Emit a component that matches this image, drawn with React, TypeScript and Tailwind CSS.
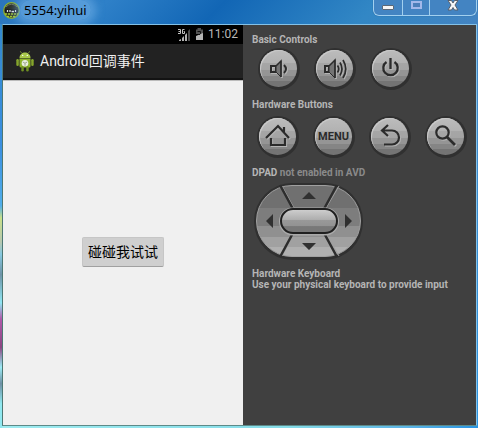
import type { ReactNode } from "react";

const bands =
  "bg-[linear-gradient(180deg,#bcbcbc_0%,#b2b2b2_34%,#a6a6a6_34%,#a4a4a4_54%,#959595_54%,#959595_70%,#858585_70%,#858585_84%,#747474_84%)]";

function RoundButton({ label, children }: { label: string; children: ReactNode }) {
  return (
    <button
      type="button"
      aria-label={label}
      className="size-[42px] shrink-0 rounded-full bg-[#303030] pt-0.5 pr-[3px] pb-[3px] pl-0.5"
    >
      <span
        className={`flex size-[37px] items-center justify-center rounded-full text-[#2b2b2b] shadow-[inset_1px_1px_0_#c8c8c8] ${bands}`}
      >
        {children}
      </span>
    </button>
  );
}

function Glyph({ children }: { children: ReactNode }) {
  return (
    <svg
      viewBox="0 0 37 37"
      className="size-[37px] drop-shadow-[1px_1px_0_#b4b4b4]"
      fill="none"
      stroke="currentColor"
      strokeWidth="2"
      aria-hidden="true"
    >
      {children}
    </svg>
  );
}

function EmulatorIcon() {
  return (
    <svg viewBox="0 0 17 17" className="size-[17px] shrink-0" aria-hidden="true">
      <circle cx="8.5" cy="8.5" r="7.8" fill="#2a2d24" stroke="#8fb030" strokeWidth="1.2" />
      <path d="M3 4.800Q8.500-.4 14 4.800" stroke="#6d725f" fill="none" />
      <path d="M2 7.500h13v3H2z" fill="#161616" />
      <path d="M4.500 8v2M7 8v2M8.500 9.500h2.500M12.500 8v2" stroke="#e4e4e4" strokeWidth="1.300" />
      <path d="M2 12h13M4 14.500h9" stroke="#a3c832" strokeWidth="1.600" strokeDasharray="2.200 .8" />
    </svg>
  );
}

function RobotIcon() {
  return (
    <svg viewBox="0 0 18 21" className="h-[21px] w-[18px] shrink-0" aria-hidden="true">
      <path d="M5.500 2 4.300.3M12.500 2 13.700.3" stroke="#8aa73a" strokeWidth=".8" />
      <path d="M3.500 7C3.500-.4 14.500-.4 14.500 7z" fill="#a9c94b" />
      <circle cx="6.700" cy="4.400" r=".7" fill="#fff" />
      <circle cx="11.300" cy="4.400" r=".7" fill="#fff" />
      <path d="M3.500 7.500h11V15q0 1.500-1.500 1.500H5Q3.500 16.500 3.500 15z" fill="#8fb52c" />
      <rect x=".3" y="8" width="2.500" height="7" rx="1.200" fill="#85a52c" />
      <rect x="15.200" y="8" width="2.500" height="7" rx="1.200" fill="#85a52c" />
      <rect x="5.300" y="15" width="2.500" height="5.500" rx="1.200" fill="#6f8f22" />
      <rect x="10.200" y="15" width="2.500" height="5.500" rx="1.200" fill="#6f8f22" />
      <circle cx="9" cy="12.200" r="3.300" fill="#e8eddf" />
      <path d="m6.800 11 2.200 1.200 2.200-1.200M9 12.200v2.600" stroke="#93a180" strokeWidth=".9" fill="none" />
    </svg>
  );
}

function StatusIcons() {
  return (
    <svg viewBox="0 0 26 14" className="h-[14px] w-[26px]" aria-hidden="true">
      <path d="M0 1.500h2.500v4H0M.5 3.500h2M6.500 1.500H4.500v4h2v-2h-.8" fill="none" stroke="#c4c4c4" />
      <path d="M12 1v12h-2V3z" fill="#4d4d4d" />
      <path d="M9 5v8H7V7zM6 8v5H4v-3zM3 11v2H1v-1z" fill="#b0b0b0" />
      <path d="M19.500 0H23v1.500h2V6h-7V1.500h1.500z" fill="#525252" />
      <path d="M18 12V8l7-3v7z" fill="#b5b5b5" />
      <path d="M19.500 3.500h3v2L21 7" stroke="#111" strokeWidth="1" fill="none" />
    </svg>
  );
}

function TitleBar() {
  return (
    <header className="flex h-6 items-start justify-between pl-[3px]">
      <div className="flex items-center">
        <EmulatorIcon />
        <h1 className="rounded-full bg-[#70afe6]/60 px-1 text-[13px] leading-5 text-black shadow-[0_0_8px_5px_#70afe699]">
          5554:yihui
        </h1>
      </div>
      <div className="mr-px flex h-4 overflow-hidden rounded-b-md border border-t-0 border-[#a2d0ef] bg-[#4384c2] shadow-[0_0_1px_#174d83]">
        <button type="button" aria-label="Minimize" className="flex w-[29px] justify-center border-r border-[#a2d0ef] pt-[5px]">
          <span className="h-[5px] w-3 rounded-[1px] border border-[#5d6875] bg-[#f5f5f5]" />
        </button>
        <button type="button" aria-label="Maximize" className="flex w-[27px] justify-center border-r border-[#a2d0ef] pt-px">
          <span className="h-2 w-[11px] border-2 border-[#a2b8ea] bg-[#4c7fba]" />
        </button>
        <button type="button" aria-label="Close" className="flex w-[46px] justify-center">
          <svg viewBox="0 0 12 11" className="h-[11px] w-3" aria-hidden="true">
            <path d="M1 .5h3.500L6 3 7.500.5H11L8 5l3 5H7.500L6 7.500 4.500 10H1l3-5z" fill="#f7f7f7" stroke="#59616d" />
          </svg>
        </button>
      </div>
    </header>
  );
}

function Phone() {
  return (
    <main className="flex w-60 shrink-0 flex-col bg-[#f0f0f0]">
      <div className="flex h-[19px] items-center justify-end gap-1 bg-black pr-[5px] font-[Roboto,sans-serif] text-[12px] leading-[19px] text-[#b9b9b9]">
        <StatusIcons />
        <time>11:02</time>
      </div>
      <div className="flex h-9 items-center gap-1.5 border-b-2 border-[#131313] bg-[#222] pl-[13px]">
        <RobotIcon />
        <h2 className="font-[Roboto,'Noto_Sans_CJK_SC',sans-serif] text-[14px] leading-5 text-[#f0f0f0]">
          Android回调事件
        </h2>
      </div>
      <div className="flex flex-1 items-center justify-center border-t border-[#bbb] pb-[3px]">
        <button
          type="button"
          className="h-[30px] rounded-[2px] border border-[#c6c6c6] border-b-[#a0a0a0] bg-[#cfcfcf] px-[5px] font-[Roboto,'Noto_Sans_CJK_SC',sans-serif] text-[14px] leading-7 text-black"
        >
          碰碰我试试
        </button>
      </div>
    </main>
  );
}

function DirectionPad() {
  return (
    <svg viewBox="0 0 110 77" className="mt-1 ml-0.5 h-[77px] w-[110px]" role="img" aria-label="DPAD">
      <defs>
        <linearGradient id="pad" x1="0" y1="0" x2="0" y2="1">
          <stop offset=".32" stopColor="#707070" />
          <stop offset=".32" stopColor="#7d7d7d" />
          <stop offset=".57" stopColor="#7d7d7d" />
          <stop offset=".57" stopColor="#909090" />
          <stop offset=".73" stopColor="#909090" />
          <stop offset=".73" stopColor="#a1a1a1" />
          <stop offset=".86" stopColor="#a1a1a1" />
          <stop offset=".86" stopColor="#b0b0b0" />
        </linearGradient>
        <linearGradient id="center" x1="0" y1="0" x2="0" y2="1">
          <stop offset="0" stopColor="#d0d0d0" />
          <stop offset=".45" stopColor="#adadad" />
          <stop offset=".46" stopColor="#999" />
          <stop offset=".72" stopColor="#929292" />
          <stop offset=".73" stopColor="#787878" />
        </linearGradient>
      </defs>
      <rect width="109" height="77" rx="38" fill="#303030" />
      <rect x="2.500" y="2.500" width="104" height="71" rx="35.500" fill="url(#pad)" stroke="#a0a0a0" />
      <path d="m28 3 12 22M85 3 72 25M28 73l12-22M85 73 72 51" stroke="#a0a0a0" strokeWidth="1" />
      <path d="m26 2 13 24M83 2 70 26M26 74l13-24M83 74 70 50" stroke="#2d2d2d" strokeWidth="2.500" />
      <rect x="25" y="24.500" width="60" height="28" rx="14" fill="#aaa" />
      <rect x="27" y="26" width="56" height="24" rx="12" fill="url(#center)" stroke="#202020" strokeWidth="2" />
      <path d="m48 16 7-7 7 7zM48 60h14l-7 7zM19 31v14l-7-7zM91 31v14l7-7z" fill="#303030" />
    </svg>
  );
}

function Controls() {
  return (
    <aside className="min-w-0 flex-1 overflow-hidden bg-[#404040] pt-2 pl-[9px] font-[Roboto,sans-serif] text-[10px] leading-[11px] font-bold text-[#b5b5b5]">
      <section>
        <h2 className="leading-[13px]">Basic Controls</h2>
        <div className="mt-0.5 flex gap-[14px] pl-1.5">
          <RoundButton label="Volume down">
            <Glyph>
              <path d="M11 16h5v6h-5z" />
              <path d="M16 16l5-5v16l-5-5z" fill="#747474" strokeWidth="1" />
              <path d="M16 16l5-5v16" strokeWidth="1.500" />
              <path d="M24 15q4 4 0 8" />
            </Glyph>
          </RoundButton>
          <RoundButton label="Volume up">
            <Glyph>
              <path d="M9 16h4v6H9z" />
              <path d="M13 16l6-6v18l-6-6z" fill="#747474" strokeWidth="1" />
              <path d="M13 16l6-6v18" strokeWidth="1.500" />
              <path d="M21.500 15.500q2.500 3.500 0 7M24 12.500q4 6.500 0 13M27 10q5.500 9 0 18" strokeWidth="1.700" />
            </Glyph>
          </RoundButton>
          <RoundButton label="Power">
            <Glyph>
              <path d="M18.500 8v11M14.500 12a7.200 7.200 0 1 0 8 0" strokeWidth="2.300" />
            </Glyph>
          </RoundButton>
        </div>
      </section>
      <section className="mt-2">
        <h2 className="leading-[13px]">Hardware Buttons</h2>
        <div className="mt-[5px] flex gap-[14px] pl-[5px]">
          <RoundButton label="Home">
            <Glyph>
              <path d="M7 20 19 8l11 12M25 15V9M12 20v7h14v-7" strokeWidth="2.200" />
            </Glyph>
          </RoundButton>
          <RoundButton label="Menu">
            <span className="text-[11px] leading-none">MENU</span>
          </RoundButton>
          <RoundButton label="Back">
            <Glyph>
              <path d="m17 7-6 5.500 6 5.500M11 12.500h10a7 7 0 0 1 0 14h-8" strokeWidth="2.200" />
            </Glyph>
          </RoundButton>
          <RoundButton label="Search">
            <Glyph>
              <circle cx="15.500" cy="14.500" r="6.200" strokeWidth="2.200" />
              <path d="m20 19 8 8" strokeWidth="2.800" />
            </Glyph>
          </RoundButton>
        </div>
      </section>
      <section className="mt-2">
        <h2 className="leading-[13px]">
          DPAD <span className="text-[#8a8a8a]">not enabled in AVD</span>
        </h2>
        <DirectionPad />
      </section>
      <section className="mt-2">
        <h2>Hardware Keyboard</h2>
        <p className="whitespace-nowrap">Use your physical keyboard to provide input</p>
      </section>
    </aside>
  );
}

export default function App() {
  return (
    <div className="flex h-screen flex-col bg-[linear-gradient(135deg,#2b75bd_0%,#2e80c8_12%,#1266b5_25%,#3287c5_42%,#4384c2_55%,#2994e2_100%)] font-['Noto_Sans',sans-serif]">
      <TitleBar />
      <div className="flex min-h-0 flex-1 bg-[linear-gradient(180deg,#3289cf_0%,#3b8fe0_30%,#51aeea_45%,#c9e08a_48%,#b7c8b0_54%,#86c8e0_57%,#6f94a8_62%,#91e6f3_69%,#b05aaa_73%,#8b4782_80%,#9debf5_85%,#6f90a5_89%,#91e8f0_94%)] bg-[length:3px_100%] bg-no-repeat pr-px pl-0.5">
        <div className="flex min-w-0 flex-1 bg-[linear-gradient(90deg,#9debf0_0%,#86dce8_60%,#5cb4e6_85%,#2994e2_100%)] pb-0.5">
          <div className="flex min-w-0 flex-1 border border-[#83c1e8] border-b-[#5d8a88] border-l-[#4d7874]">
            <Phone />
            <Controls />
          </div>
        </div>
      </div>
    </div>
  );
}
